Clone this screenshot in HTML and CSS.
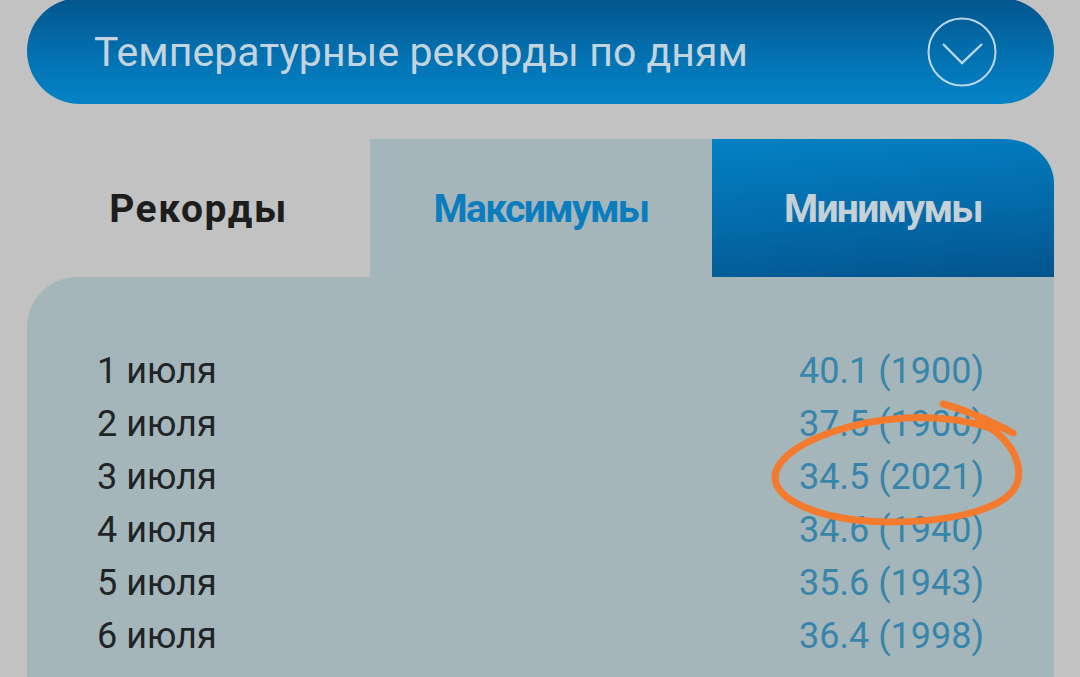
FILE: index.html
```html
<!DOCTYPE html>
<html lang="ru">
<head>
<meta charset="utf-8">
<title>Температурные рекорды по дням</title>
<link rel="stylesheet" href="styles.css">
</head>
<body>
<div class="page">
  <header class="pill">
    <h1 class="pill-title">Температурные рекорды по дням</h1>
    <svg class="pill-icon" width="70" height="70" viewBox="0 0 70 70">
      <circle cx="35" cy="35" r="33.5" fill="none" stroke="#bcd6ea" stroke-width="2"/>
      <polyline points="16,27 35,46 55,27" fill="none" stroke="#bcd6ea" stroke-width="2.4"/>
    </svg>
  </header>

  <nav class="tabs">
    <div class="tab tab-records">Рекорды</div>
    <div class="tab tab-max">Максимумы</div>
    <div class="tab tab-min">Минимумы</div>
  </nav>

  <section class="panel">
    <div class="row"><span class="day">1 июля</span><span class="val">40.1 (1900)</span></div>
    <div class="row"><span class="day">2 июля</span><span class="val">37.5 (1900)</span></div>
    <div class="row"><span class="day">3 июля</span><span class="val">34.5 (2021)</span></div>
    <div class="row"><span class="day">4 июля</span><span class="val">34.6 (1940)</span></div>
    <div class="row"><span class="day">5 июля</span><span class="val">35.6 (1943)</span></div>
    <div class="row"><span class="day">6 июля</span><span class="val">36.4 (1998)</span></div>
  </section>

  <svg class="annotation" width="1080" height="677" viewBox="0 0 1080 677">
    <path d="M943 404 C966 410 994 423 1013 433" fill="none" stroke="#f47a2e" stroke-width="7" stroke-linecap="round"/>
    <path d="M978 421 C1006 434 1022 458 1018 480 C1012 508 955 522 888 522 C830 521 788 506 777 486 C768 466 792 446 832 432 C872 418 935 410 990 428" fill="none" stroke="#f47a2e" stroke-width="7" stroke-linecap="round"/>
  </svg>
</div>
</body>
</html>
```

FILE: styles.css
```css
* { box-sizing: border-box; }
html, body {
  margin: 0;
  padding: 0;
  background: #c2c2c2;
  overflow: hidden;
}
.page {
  position: relative;
  width: 1080px;
  height: 677px;
  padding: 0 26px 0 27px;
  overflow: hidden;
}
.pill {
  margin-top: -2px;
  height: 106px;
  border-radius: 53px;
  background: linear-gradient(180deg, #03558c 0%, #0371b1 55%, #0384c6 100%);
  display: flex;
  align-items: center;
  justify-content: space-between;
  padding: 0 57px 0 67px;
}
.pill-title {
  margin: 0;
  font-family: Roboto, "Liberation Sans", sans-serif;
  font-weight: 400;
  font-size: 41px;
  color: #c3d4df;
  letter-spacing: 0.05px;
  padding-top: 2px;
}
.pill-icon { display: block; margin-top: 2px; }

.tabs {
  margin-top: 35px;
  height: 138px;
  display: grid;
  grid-template-columns: 343px 342px 342px;
}
.tab {
  display: flex;
  align-items: center;
  justify-content: center;
  font-family: Roboto, "Liberation Sans", sans-serif;
  font-weight: 700;
  font-size: 39px;
  padding-top: 2px;
}
.tab-records { color: #1d1d1d; letter-spacing: 1.6px; }
.tab-max { background: #a5b6bb; color: #0b7dbf; letter-spacing: -1.7px; }
.tab-min {
  background: linear-gradient(175deg, #0381c4 0%, #036cab 50%, #04548d 100%);
  color: #c5d0d7;
  letter-spacing: -1.7px;
  border-top-right-radius: 50px 44px;
}

.panel {
  background: #a5b6bb;
  border-top-left-radius: 50px;
  height: 420px;
  padding: 68px 70px 0 70px;
  display: flex;
  flex-direction: column;
}
.row {
  display: flex;
  justify-content: space-between;
  align-items: center;
  height: 53px;
  font-family: Roboto, "Liberation Sans", sans-serif;
  font-size: 36px;
  line-height: 53px;
}
.day { color: #1f2427; }
.val { color: #3885ab; }

.annotation {
  position: absolute;
  left: 0;
  top: 0;
  pointer-events: none;
}
```
